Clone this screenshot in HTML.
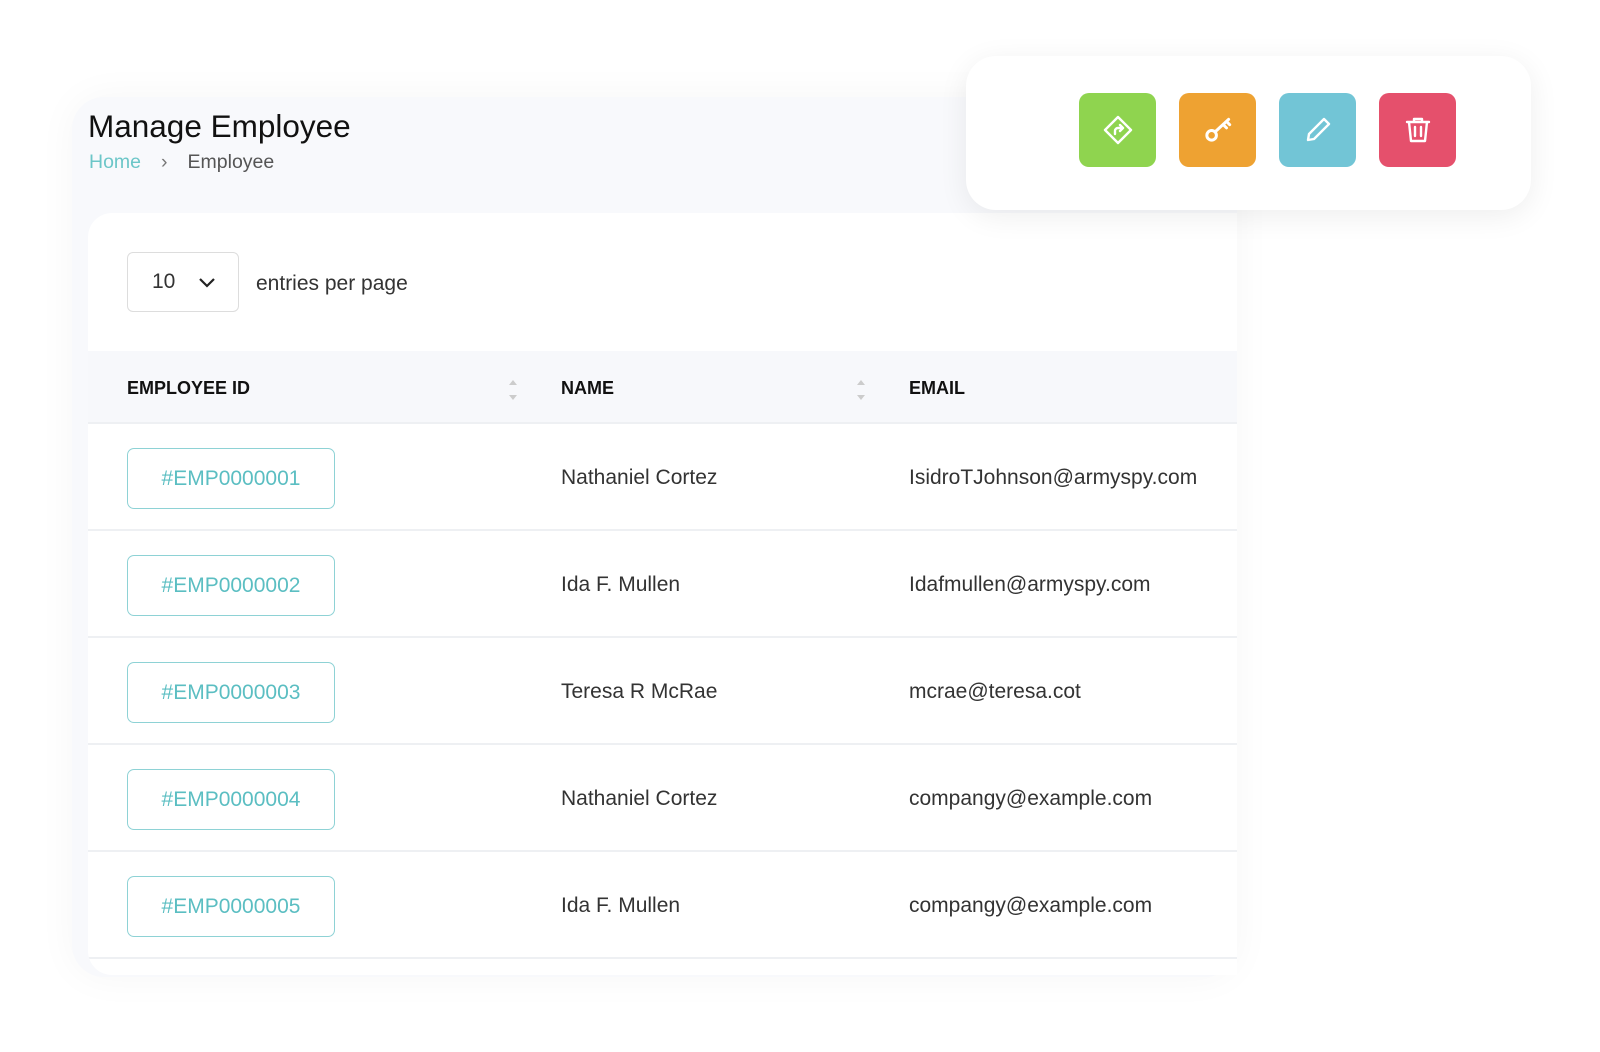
<!DOCTYPE html>
<html><head><meta charset="utf-8"><style>
*{margin:0;padding:0;box-sizing:border-box}
body{width:1600px;height:1052px;background:#fff;position:relative;overflow:hidden;font-family:"Liberation Sans",sans-serif;color:#333}
.abs{position:absolute}
.outer{left:72px;top:97px;width:1165px;height:880px;background:#f8f9fc;border-radius:32px;box-shadow:0 0 40px rgba(0,0,0,0.04)}
.card{left:88px;top:213px;width:1149px;height:762px;background:#fff;border-radius:24px 0 0 24px;overflow:hidden}
.title{left:88px;top:108px;font-size:31.5px;color:#111;white-space:nowrap}
.bc{left:89px;top:151px;font-size:19.5px;color:#555;white-space:nowrap}
.bc span.h{color:#6cc6c8}
.sel{left:127px;top:252px;width:112px;height:60px;border:1px solid #ddd;border-radius:6px;font-size:21px;color:#333}
.hdr{left:0;top:138px;width:1149px;height:73px;background:#f7f8fb;border-bottom:2px solid #eef0f3}
.th{font-size:18px;font-weight:bold;color:#111;top:378px}
.row{left:0;width:1149px;height:107px;border-bottom:2px solid #eef0f3}
.id{left:39px;width:208px;height:61px;border:1.5px solid #8ed2d5;border-radius:7px;color:#5bbec2;font-size:21px;display:flex;align-items:center;justify-content:center}
.tx{font-size:21px;color:#333;white-space:nowrap}
.btncard{left:966px;top:56px;width:565px;height:154px;background:#fff;border-radius:30px;box-shadow:0 6px 30px rgba(0,0,0,0.07)}
.btn{top:93px;width:77px;height:74px;border-radius:10px;display:flex;align-items:center;justify-content:center}
</style></head><body>
<div class="abs outer"></div>
<div class="abs title">Manage Employee</div>
<div class="abs bc"><span class="h">Home</span><span style="margin:0 20px 0 20px;color:#777">&#8250;</span>Employee</div>
<div class="abs card">
  <div class="abs hdr"></div>
  <div class="abs row" style="top:211px"></div>
  <div class="abs row" style="top:318px"></div>
  <div class="abs row" style="top:425px"></div>
  <div class="abs row" style="top:532px"></div>
  <div class="abs row" style="top:639px"></div>
</div>
<div class="abs sel"><span class="abs" style="left:24px;top:17px">10</span>
<svg class="abs" style="left:70px;top:24px" width="18" height="12" viewBox="0 0 18 12"><path d="M2 2l7 7 7-7" fill="none" stroke="#222" stroke-width="2.2"/></svg></div>
<div class="abs tx" style="left:256px;top:272px">entries per page</div>
<div class="abs th" style="left:127px">EMPLOYEE ID</div>
<div class="abs th" style="left:561px">NAME</div>
<div class="abs th" style="left:909px">EMAIL</div>
<svg class="abs" style="left:508px;top:378px" width="10" height="24"><path d="M5 2l4 5H1z M5 22l4-5H1z" fill="#ccc"/></svg>
<svg class="abs" style="left:856px;top:378px" width="10" height="24"><path d="M5 2l4 5H1z M5 22l4-5H1z" fill="#ccc"/></svg>

<div class="abs id" style="left:127px;top:448px">#EMP0000001</div>
<div class="abs tx" style="left:561px;top:466px">Nathaniel Cortez</div>
<div class="abs tx" style="left:909px;top:466px">IsidroTJohnson@armyspy.com</div>

<div class="abs id" style="left:127px;top:555px">#EMP0000002</div>
<div class="abs tx" style="left:561px;top:573px">Ida F. Mullen</div>
<div class="abs tx" style="left:909px;top:573px">Idafmullen@armyspy.com</div>

<div class="abs id" style="left:127px;top:662px">#EMP0000003</div>
<div class="abs tx" style="left:561px;top:680px">Teresa R McRae</div>
<div class="abs tx" style="left:909px;top:680px">mcrae@teresa.cot</div>

<div class="abs id" style="left:127px;top:769px">#EMP0000004</div>
<div class="abs tx" style="left:561px;top:787px">Nathaniel Cortez</div>
<div class="abs tx" style="left:909px;top:787px">compangy@example.com</div>

<div class="abs id" style="left:127px;top:876px">#EMP0000005</div>
<div class="abs tx" style="left:561px;top:894px">Ida F. Mullen</div>
<div class="abs tx" style="left:909px;top:894px">compangy@example.com</div>

<div class="abs btncard"></div>
<div class="abs btn" style="left:1079px;background:#8fd44f">
<svg width="32" height="32" viewBox="0 0 32 32" fill="none" stroke="#fff" stroke-width="2.4" stroke-linejoin="round" stroke-linecap="round"><path d="M16 3l13 13-13 13L3 16z"/><path d="M13 20v-3a3 3 0 0 1 3-3h4M18 11l3 3-3 3"/></svg></div>
<div class="abs btn" style="left:1179px;background:#eea232">
<svg width="34" height="34" viewBox="0 0 32 32" fill="none" stroke="#fff" stroke-width="2.8" stroke-linecap="round"><circle cx="10" cy="21" r="4.5"/><path d="M13.5 17.5L26 6M21 11l3 3M24 8l3 3"/></svg></div>
<div class="abs btn" style="left:1279px;background:#72c5d6">
<svg width="32" height="32" viewBox="0 0 32 32" fill="none" stroke="#fff" stroke-width="2.4" stroke-linejoin="round"><path d="M22 5l5 5L12 25l-6 1 1-6z"/></svg></div>
<div class="abs btn" style="left:1379px;background:#e5506c">
<svg width="32" height="32" viewBox="0 0 32 32" fill="none" stroke="#fff" stroke-width="2.4" stroke-linejoin="round" stroke-linecap="round"><path d="M5 8h22M12 8V5h8v3M7 8l2 19h14l2-19M13 13v9M19 13v9"/></svg></div>
</body></html>
